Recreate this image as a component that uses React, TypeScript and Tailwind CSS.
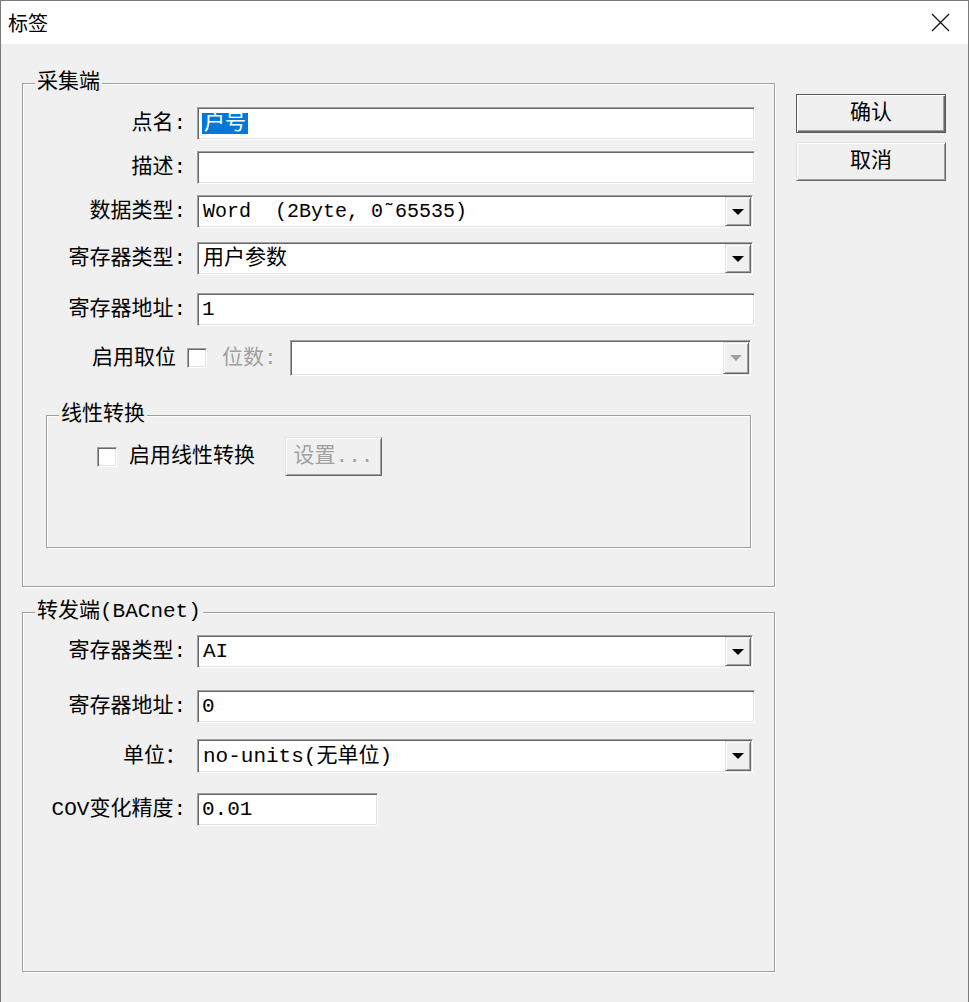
import React from 'react';

// classic win32 dialog: "标签"

const sunken =
  'bg-white border border-t-[#a0a0a0] border-l-[#a0a0a0] border-r-white border-b-white shadow-[inset_1px_1px_0_#696969,inset_-1px_-1px_0_#e3e3e3]';
const raised =
  'bg-[#f0f0f0] border border-t-[#e3e3e3] border-l-[#e3e3e3] border-r-[#696969] border-b-[#696969] shadow-[inset_1px_1px_0_#fff,inset_-1px_-1px_0_#a0a0a0]';
const etched =
  'relative border border-[#a0a0a0] shadow-[inset_1px_1px_0_#fff,1px_1px_0_#fff]';
const sim = "font-['Liberation_Mono','Noto_Sans_CJK_SC',monospace]";

function Arrow({ disabled }: { disabled?: boolean }) {
  return (
    <svg width="12" height="6" viewBox="0 0 12 6">
      <path d="M0 0h12L6 6z" fill={disabled ? '#a0a0a0' : '#000'} />
    </svg>
  );
}

function Edit({ children, className = '' }: { children?: React.ReactNode; className?: string }) {
  return (
    <div className={`${sunken} h-[33px] flex items-center pl-[4px] whitespace-pre text-[21px] leading-none ${className}`}>
      {children}
    </div>
  );
}

function Combo({
  children,
  className = '',
  disabled,
}: {
  children?: React.ReactNode;
  className?: string;
  disabled?: boolean;
}) {
  return (
    <div className={`${sunken} flex items-stretch p-[1px] ${className}`}>
      <div className="flex-1 flex items-center pl-[4px] whitespace-pre text-[21px] leading-none">{children}</div>
      <div className={`${raised} w-[26px] flex items-center justify-center`}>
        <Arrow disabled={disabled} />
      </div>
    </div>
  );
}

function Check() {
  return <div className={`${sunken} w-[20px] h-[20px] shrink-0`} />;
}

function Label({ children, className = 'w-[163px]' }: { children: React.ReactNode; className?: string }) {
  return <div className={`${className} text-right text-[21px] leading-none whitespace-pre shrink-0`}>{children}</div>;
}

function Legend({ children, left = 'left-[12px]' }: { children: React.ReactNode; left?: string }) {
  return (
    <span className={`absolute ${left} top-[-13px] bg-[#f0f0f0] px-[2px] text-[21px] leading-[24px] whitespace-pre`}>
      {children}
    </span>
  );
}

export default function App() {
  return (
    <div className={`${sim} w-[969px] h-[1002px] flex flex-col bg-[#f0f0f0] border-x border-t border-[#7a7a7a] text-black overflow-hidden`}>
      {/* Title bar */}
      <div className="h-[43px] bg-white flex items-center justify-between pl-[7px] pr-[18px] shrink-0">
        <span className="font-['Noto_Sans_CJK_SC',sans-serif] text-[20px]">标签</span>
        <svg width="19" height="19" viewBox="0 0 19 19">
          <path d="M1 1L18 18M18 1L1 18" stroke="#111" strokeWidth="1.3" />
        </svg>
      </div>

      {/* Body */}
      <div className="flex pl-[21px] pt-[39px]">
        <div className="w-[753px] flex flex-col">
          {/* 采集端 */}
          <div className={`${etched} h-[504px] pr-[19px]`}>
            <Legend>采集端</Legend>

            <div className="flex items-center mt-[23px]">
              <Label>点名:</Label>
              <Edit className="ml-[11px] flex-1 pl-[2px]">
                <span className="bg-[#0078d7] text-white px-[2px] leading-[21px]">户号</span>
              </Edit>
            </div>

            <div className="flex items-center mt-[11px]">
              <Label>描述:</Label>
              <Edit className="ml-[11px] flex-1" />
            </div>

            <div className="flex items-center mt-[11px]">
              <Label>数据类型:</Label>
              <Combo className="ml-[11px] w-[556px] h-[33px]">
                <span className="text-[20px]">Word  (2Byte, 0˜65535)</span>
              </Combo>
            </div>

            <div className="flex items-center mt-[14px]">
              <Label>寄存器类型:</Label>
              <Combo className="ml-[11px] w-[556px] h-[33px]">用户参数</Combo>
            </div>

            <div className="flex items-center mt-[18px]">
              <Label>寄存器地址:</Label>
              <Edit className="ml-[11px] flex-1">1</Edit>
            </div>

            <div className="flex items-center mt-[14px] h-[36px]">
              <Label className="w-[153px]">启用取位</Label>
              <div className="ml-[11px]">
                <Check />
              </div>
              <div className="ml-[15px] w-[68px] text-[21px] leading-none text-[#a0a0a0]">位数:</div>
              <Combo className="w-[461px] h-[36px]" disabled />
            </div>

            {/* 线性转换 */}
            <div className={`${etched} ml-[23px] mt-[39px] w-[705px] h-[133px]`}>
              <Legend>线性转换</Legend>
              <div className="flex items-center pt-[21px] pl-[50px]">
                <Check />
                <span className="ml-[12px] text-[21px] leading-none">启用线性转换</span>
                <div className={`${raised} ml-[30px] w-[97px] h-[39px] flex items-center justify-center text-[21px] leading-none text-[#a0a0a0]`}>
                  设置...
                </div>
              </div>
            </div>
          </div>

          {/* 转发端 */}
          <div className={`${etched} h-[360px] mt-[25px] pr-[19px]`}>
            <Legend>转发端(BACnet)</Legend>

            <div className="flex items-center mt-[22px]">
              <Label>寄存器类型:</Label>
              <Combo className="ml-[11px] w-[556px] h-[33px]">AI</Combo>
            </div>

            <div className="flex items-center mt-[22px]">
              <Label>寄存器地址:</Label>
              <Edit className="ml-[11px] flex-1 h-[32px]">0</Edit>
            </div>

            <div className="flex items-center mt-[16px]">
              <Label>单位：</Label>
              <Combo className="ml-[11px] w-[556px] h-[34px]">no-units(无单位)</Combo>
            </div>

            <div className="flex items-center mt-[20px]">
              <Label>COV变化精度:</Label>
              <Edit className="ml-[11px] w-[181px] h-[32px]">0.01</Edit>
            </div>
          </div>
        </div>

        {/* Buttons */}
        <div className="ml-[21px] mt-[11px] flex flex-col w-[150px]">
          <div className="h-[39px] flex items-center justify-center text-[21px] leading-none bg-[#f0f0f0] border border-[#5a5a5a] shadow-[inset_1px_1px_0_#fff,inset_-1px_-1px_0_#696969,inset_-2px_-2px_0_#a0a0a0]">
            确认
          </div>
          <div className={`${raised} mt-[9px] h-[39px] flex items-center justify-center text-[21px] leading-none`}>
            取消
          </div>
        </div>
      </div>
    </div>
  );
}
